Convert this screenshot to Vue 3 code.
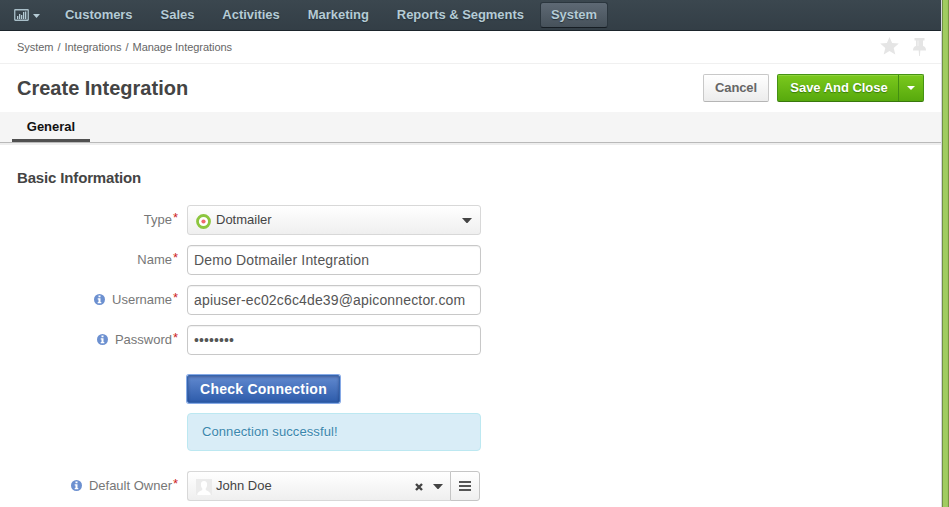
<script setup>
const menu = ['Customers', 'Sales', 'Activities', 'Marketing', 'Reports & Segments', 'System']
const fields = [
  { label: 'Name', value: 'Demo Dotmailer Integration' },
  { label: 'Username', value: 'apiuser-ec02c6c4de39@apiconnector.com', info: true },
  { label: 'Password', value: '••••••••', info: true, secret: true },
]
</script>

<template>
  <div class="screen">
    <div class="page">
      <header class="navbar">
        <div class="dash">
          <svg width="15" height="12" viewBox="0 0 15 12">
            <rect x=".75" y=".75" width="13.5" height="10.5" rx=".5" fill="none" stroke="#a9bfc9" stroke-width="1.3" />
            <path d="M3 7h1.300v3H3zM5 5h1.300v5H5zM7 6h1.300v4H7zM9 3h1.300v7H9zM11 2.500h1.300V10H11z" fill="#b5cbd5" />
          </svg>
          <svg class="dash-caret" width="7" height="4" viewBox="0 0 7 4"><path d="M0 0h7L3.500 4z" fill="#b5cbd5" /></svg>
        </div>
        <nav>
          <a v-for="item in menu" :key="item" :class="{ active: item === 'System' }">{{ item }}</a>
        </nav>
      </header>

      <div class="crumbs">
        <span class="trail">System<i>/</i>Integrations<i>/</i>Manage Integrations</span>
        <svg class="star" width="19" height="18" viewBox="0 0 19 18"><path d="M9.500 0l2.600 6 6.700.6-5.100 4.500 1.600 6.500-5.800-3.500-5.800 3.500 1.600-6.500L.2 6.600 6.900 6z" fill="#e5e5e5" /></svg>
        <svg class="pin" width="13" height="18" viewBox="0 0 13 18"><path d="M1.500 0h10v2.500H10V8c2 .6 3 2 3 4.500H7.300L6.900 18h-.8l-.4-5.500H0C0 10 1 8.600 3 8V2.500H1.500z" fill="#e5e5e5" /><path d="M4.500 2.500h1V8h-1z" fill="#f3f3f3" /></svg>
      </div>

      <div class="titlebar">
        <h1>Create Integration</h1>
        <button class="cancel">Cancel</button>
        <div class="save">
          <button class="save-main">Save And Close</button>
          <button class="save-more"><svg width="8" height="4" viewBox="0 0 8 4"><path d="M0 0h8L4 4z" fill="#fff" /></svg></button>
        </div>
      </div>

      <div class="tabs"><div class="tab">General</div></div>

      <main>
        <h2>Basic Information</h2>

        <div class="row">
          <div class="label">Type<em>*</em></div>
          <div class="select">
            <svg class="logo" width="15" height="15" viewBox="0 0 15 15"><circle cx="7.500" cy="7.500" r="6" fill="#fff" stroke="#8dc63f" stroke-width="2.800" /><circle cx="7.500" cy="7.500" r="2.100" fill="#f0686c" /></svg>
            <span>Dotmailer</span>
            <svg class="caret" width="10" height="5" viewBox="0 0 10 5"><path d="M0 0h10L5.500 5h-1z" fill="#444" /></svg>
          </div>
        </div>

        <div v-for="f in fields" :key="f.label" class="row">
          <div class="label">
            <svg v-if="f.info" class="info" width="11" height="11" viewBox="0 0 11 11"><circle cx="5.500" cy="5.500" r="5.500" fill="#6c90d0" /><path d="M4.500 1.500h2v1.800h-2zM3.700 4.200h2.800v3.900h.8v1.200H3.700V8.100h.8V5.400h-.8z" fill="#fff" /></svg>
            {{ f.label }}<em>*</em>
          </div>
          <div class="input"><span :class="{ secret: f.secret }">{{ f.value }}</span></div>
        </div>

        <div class="check-wrap">
          <button class="check">Check Connection</button>
          <div class="alert">Connection successful!</div>
        </div>

        <div class="row">
          <div class="label">
            <svg class="info" width="11" height="11" viewBox="0 0 11 11"><circle cx="5.500" cy="5.500" r="5.500" fill="#6c90d0" /><path d="M4.500 1.500h2v1.800h-2zM3.700 4.200h2.800v3.900h.8v1.200H3.700V8.100h.8V5.400h-.8z" fill="#fff" /></svg>
            Default Owner<em>*</em>
          </div>
          <div class="owner">
            <div class="select">
              <svg class="avatar" width="16" height="16" viewBox="0 0 16 16"><path d="M0 0h16v16H0z" fill="#ebebeb" /><path d="M8 2c2.200 0 3.300 1.600 3.100 3.800C11 8 10.200 9 9.700 9.600v1.200c.3 1 4.500 1.200 5 4.700V16H1.300v-.5c.5-3.500 4.700-3.700 5-4.700V9.600C5.800 9 5 8 4.900 5.800 4.700 3.600 5.800 2 8 2z" fill="#fff" /></svg>
              <span>John Doe</span>
              <svg class="clear" width="8" height="8" viewBox="0 0 8 8"><path d="M1 1l6 6M7 1L1 7" stroke="#444" stroke-width="2.400" /></svg>
              <svg class="caret" width="10" height="5" viewBox="0 0 10 5"><path d="M0 0h10L5.500 5h-1z" fill="#444" /></svg>
            </div>
            <button class="list"><svg width="12" height="10" viewBox="0 0 12 10"><path d="M0 0h12v2H0zM0 4h12v2H0zM0 8h12v2H0z" fill="#555" /></svg></button>
          </div>
        </div>
      </main>
    </div>
    <div class="edge"></div>
  </div>
</template>

<style>
body { overflow: hidden; }
</style>

<style scoped>
* { box-sizing: border-box; }
.screen { display: flex; width: 949px; height: 507px; background: #fff; font: 13px/20px "Liberation Sans", Arial, sans-serif; color: #444; overflow: hidden; }
svg { display: block; flex: none; }
button { font: inherit; padding: 0; margin: 0; }
.page { width: 941px; flex: none; overflow: hidden; }
.edge { width: 8px; background: linear-gradient(90deg, #d4d7dc 0 1px, #719044 1px 2px, #a0cc60 2px 6px, #9cc75e 6px 7px, #769840 7px 8px); }
.navbar { display: flex; height: 31px; background: linear-gradient(#3b474f, #333e46); border-bottom: 1px solid #1b242b; }
.dash { display: flex; width: 54px; padding: 9px 0 0 14px; }
.dash-caret { margin: 5px 0 0 4px; }
nav { display: flex; gap: 6px; padding-top: 2px; }
nav a { height: 26px; padding: 0 10px; border: 1px solid transparent; border-radius: 3px; font-weight: bold; line-height: 24px; letter-spacing: -.04px; color: #b5cbd5; text-shadow: 0 1px 1px #26323a; white-space: nowrap; }
nav a.active { margin-left: -1px; background: linear-gradient(#5e6974, #46515a); border-color: #2b363e; border-bottom-color: #161d23; }
.crumbs { display: flex; height: 33px; padding: 6px 15px 0 17px; border-bottom: 1px solid #f0f0f0; font-size: 11px; color: #666; line-height: 21px; }
.crumbs i { font-style: normal; margin: 0 4px; }
.trail { flex: 1; letter-spacing: -.04px; }
.star { margin-right: 14px; }
.pin { margin-top: 1px; }
.titlebar { display: flex; height: 48px; padding: 10px 17px 0; }
h1 { flex: 1; margin: 0; font-size: 20px; line-height: 28px; color: #444; }
.cancel { width: 66px; height: 28px; margin-right: 8px; border: 1px solid #c8c8c8; border-bottom-color: #b5b5b5; border-radius: 2px; background: linear-gradient(#fff, #ececec); color: #666; font-weight: bold; letter-spacing: -.1px; }
.save { display: flex; width: 147px; height: 28px; border: 1px solid #459313; border-bottom-color: #38780d; border-radius: 2px; background: linear-gradient(#7bc91d, #57a90d); box-shadow: inset 0 1px #8fd33d; }
.save button { border: 0; background: none; color: #fff; font-weight: bold; text-shadow: 0 1px 1px #397d08; }
.save .save-main { width: 120px; padding-left: 2px; letter-spacing: -.03px; }
.save .save-more { display: flex; flex: 1; align-items: center; justify-content: center; border-left: 1px solid #438e12; }
.tabs { height: 33px; padding-left: 12px; background: #f5f5f5; border-bottom: 2px solid #eee; box-shadow: inset 0 -1px #b9b9b9; }
.tab { width: 78px; height: 30px; border-bottom: 3px solid #505050; font-weight: bold; line-height: 29px; text-align: center; color: #111; }
main { padding-top: 22px; }
h2 { margin: 0 0 16px 17px; font-size: 15px; line-height: 22px; letter-spacing: -.15px; }
.row { display: flex; height: 30px; margin-bottom: 10px; }
.label { display: flex; width: 187px; flex: none; justify-content: flex-end; padding-right: 8px; line-height: 29px; color: #777; white-space: nowrap; }
.label em { width: 6px; margin-left: 1px; font-style: normal; line-height: 25px; color: #c22; }
.info { margin: 9px 7px 0 0; }
.select { display: flex; align-items: center; width: 294px; height: 30px; padding: 0 8px; border: 1px solid #d8d8d8; border-radius: 3px; background: linear-gradient(#fff, #efefef); color: #444; }
.select span { flex: 1; line-height: 28px; }
.logo { margin: 2px 5px 0 0; }
.caret { margin-top: 1px; }
.input { width: 294px; height: 30px; padding: 0 6px; border: 1px solid #c8c8c8; border-radius: 4px; box-shadow: inset 0 1px 1px rgba(0,0,0,.06); font-size: 14px; line-height: 28px; letter-spacing: .155px; color: #555; white-space: nowrap; }
.secret { letter-spacing: .1px; }
.check-wrap { display: flex; flex-direction: column; margin: 20px 0 20px 187px; }
.check { width: 153px; height: 28px; border: 1px solid #3565ae; border-radius: 2px; background: linear-gradient(#6189cf, #2e5cab); box-shadow: 0 0 0 1px #86a9e6, inset 0 1px 3px rgba(0,0,40,.35); color: #fff; font-size: 14px; font-weight: bold; letter-spacing: .25px; }
.alert { width: 294px; height: 38px; margin-top: 10px; padding-left: 14px; border: 1px solid #bce8f1; border-radius: 4px; background: #d9edf7; color: #3a87ad; line-height: 36px; letter-spacing: .09px; text-shadow: 0 1px 0 rgba(255,255,255,.5); }
.owner { display: flex; }
.owner .select { width: 263px; padding-right: 7px; border-right: 0; border-radius: 3px 0 0 3px; }
.avatar { margin: 2px 4px 0 0; }
.clear { margin: 1px 10px 0 0; }
.list { display: flex; align-items: center; justify-content: center; width: 30px; height: 30px; border: 1px solid #c5c5c5; border-radius: 0 3px 3px 0; background: linear-gradient(#fff, #efefef); }
</style>
